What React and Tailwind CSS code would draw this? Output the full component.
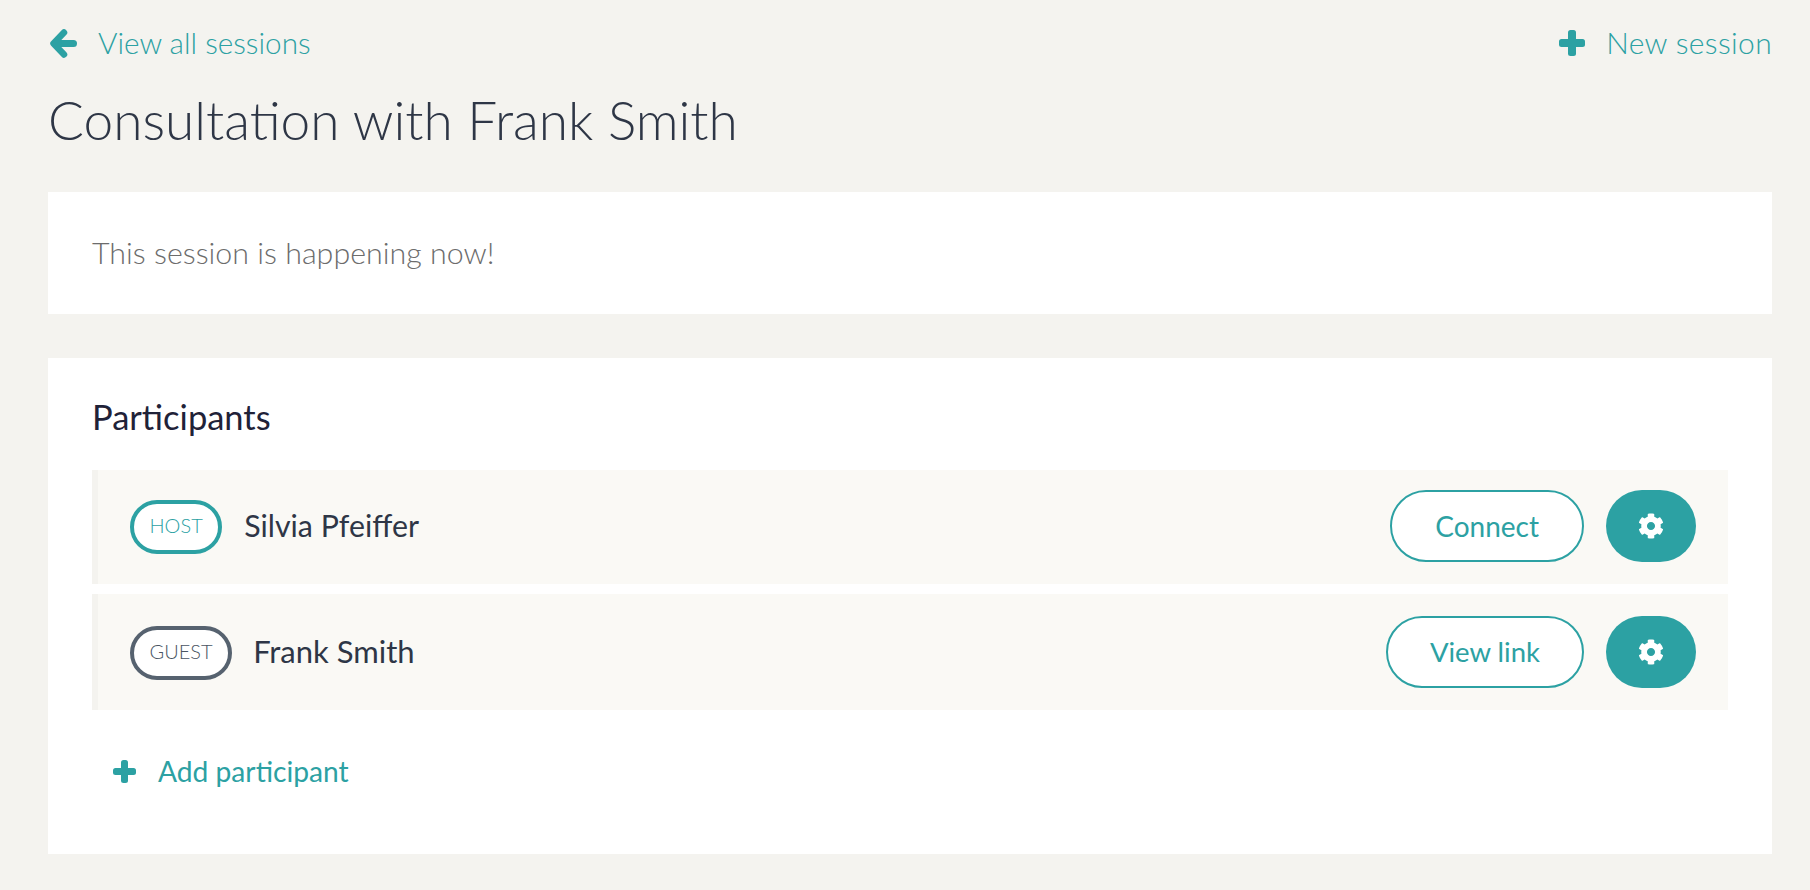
import React from "react";
import { FaCog } from "react-icons/fa";

function Plus({ size, stroke }) {
  const offset = (size - stroke) / 2;
  return (
    <svg width={size} height={size} viewBox={`0 0 ${size} ${size}`} fill="#2ca1a3">
      <rect x="0" y={offset} width={size} height={stroke} rx="2.5" />
      <rect x={offset} y="0" width={stroke} height={size} rx="2.5" />
    </svg>
  );
}

function ArrowLeft() {
  return (
    <svg width="27" height="29" viewBox="0 0 27 29" fill="none" stroke="#2ca1a3" strokeLinecap="round" strokeLinejoin="round">
      <path d="M14 3.5 L3.5 14.5 L14 25.5" strokeWidth="6.5" />
      <path d="M6 14.5 H23.5" strokeWidth="7" />
    </svg>
  );
}

function Row({ badge, badgeClass, name, nameClass, action, actionText, height, gap, actionClass }) {
  return (
    <div className={`flex ${height} items-center justify-between border-l-[6px] border-[#f4f3ef] bg-[#faf9f5] px-[32px]`}>
      <div className={`flex items-center ${gap}`}>
        <span className={`flex h-[54px] items-center justify-center rounded-[27px] border-[4px] bg-white px-[15.5px] pb-[4px] text-[20px] font-light ${badgeClass}`}>
          {badge}
        </span>
        <span className={`text-[#2e3646] ${nameClass}`}>{name}</span>
      </div>
      <div className={`flex items-center gap-[22px] ${actionClass}`}>
        <button className={`flex h-[72px] items-center justify-center rounded-[36px] border-2 border-[#2ca1a3] bg-white ${actionText} text-[#2ca1a3]`}>
          {action}
        </button>
        <button className="flex h-[72px] w-[90px] items-center justify-center rounded-[36px] bg-[#2ca1a3] text-white">
          <FaCog size={26} />
        </button>
      </div>
    </div>
  );
}

export default function App() {
  return (
    <div className="min-h-[890px] bg-[#f4f3ef] pb-[36px] pl-[48px] pr-[38px] pt-[24px] font-['Lato',sans-serif]">
      <div className="flex h-[38px] items-center justify-between font-light text-[#2ca1a3]">
        <a className="flex items-center gap-[21px] pl-[2px] text-[29.7px]">
          <ArrowLeft />
          <span>View all sessions</span>
        </a>
        <a className="flex items-center gap-[21px] text-[30px] tracking-[0.35px]">
          <Plus size={26} stroke={8} />
          <span className="pb-[2px]">New session</span>
        </a>
      </div>
      <h1 className="mt-[24px] text-[53.2px] font-light leading-[66px] text-[#2e3646]">Consultation with Frank Smith</h1>
      <div className="mt-[40px] flex h-[122px] items-center bg-white px-[44px] text-[30.4px] font-light text-[#6c6c6c]">
        This session is happening now!
      </div>
      <div className="mt-[44px] h-[496px] bg-white px-[44px] pt-[37px]">
        <h2 className="text-[34.5px] font-normal leading-[44px] text-[#1f2238]">Participants</h2>
        <div className="mt-[31px] flex flex-col gap-[10px]">
          <Row badge="HOST" badgeClass="border-[#2ca1a3] text-[#2ca1a3]" name="Silvia Pfeiffer" nameClass="pb-[3px] text-[30.3px]" action="Connect" actionText="px-[43px] text-[28px]" height="h-[114px]" gap="gap-[22px]" actionClass="pb-[2px]" />
          <Row badge="GUEST" badgeClass="mt-[2px] border-[#56626f] text-[#4a5563]" name="Frank Smith" nameClass="pb-[2px] text-[31px]" action="View link" actionText="px-[42px] text-[27.5px]" height="h-[116px]" gap="gap-[21px]" actionClass="" />
        </div>
        <a className="ml-[21px] mt-[40px] flex items-center gap-[22px] text-[28.2px] text-[#2ca1a3]">
          <Plus size={23} stroke={7} />
          <span>Add participant</span>
        </a>
      </div>
    </div>
  );
}
